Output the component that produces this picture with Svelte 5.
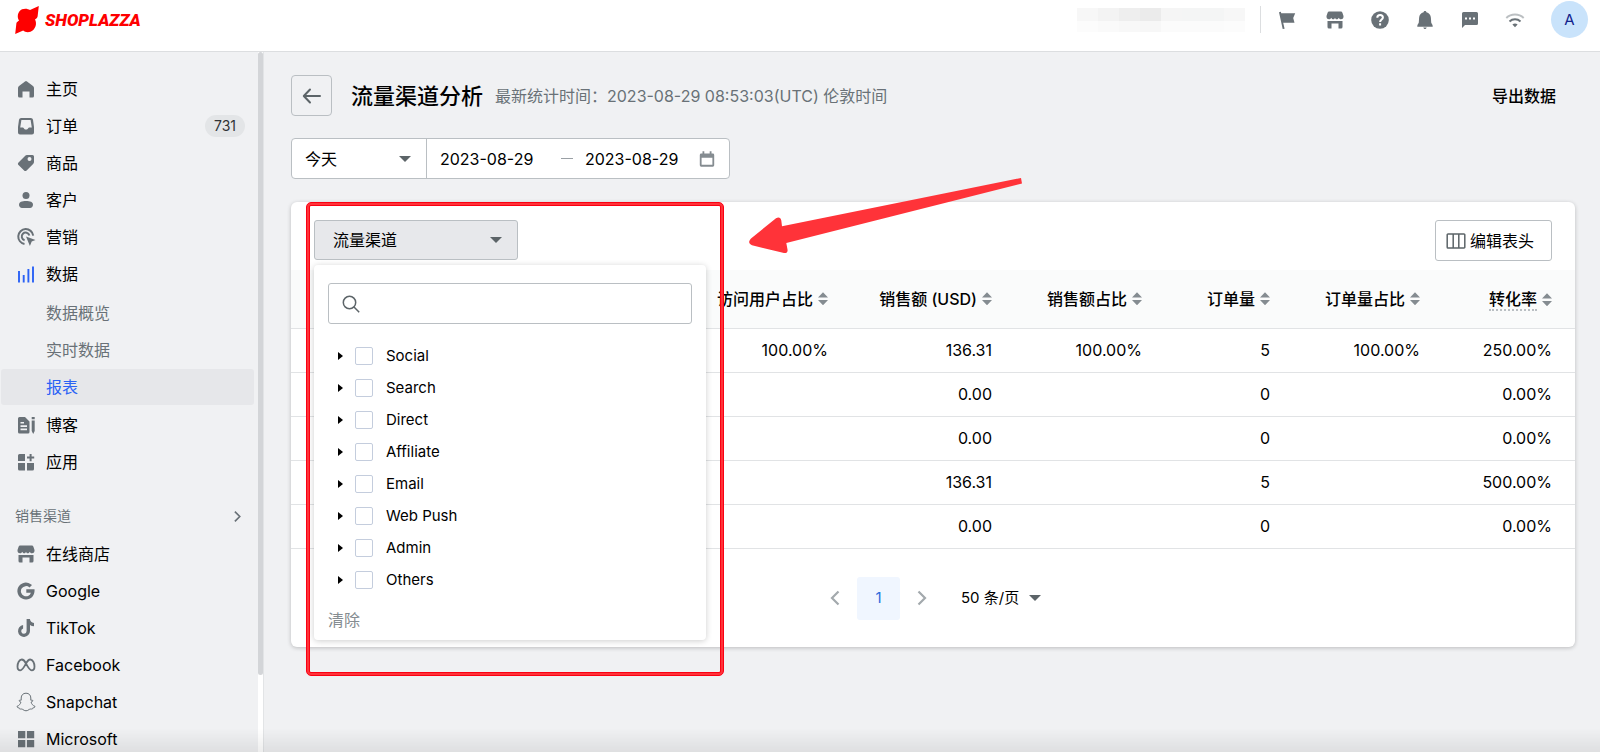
<script lang="ts">
  type NavItem = { label: string; icon?: string; badge?: string; children?: string[] };

  const menu: NavItem[] = [
    { label: '主页', icon: 'home' },
    { label: '订单', icon: 'inbox', badge: '731' },
    { label: '商品', icon: 'tag' },
    { label: '客户', icon: 'user' },
    { label: '营销', icon: 'target' },
    { label: '数据', icon: 'chart', children: ['数据概览', '实时数据', '报表'] },
    { label: '博客', icon: 'blog' },
    { label: '应用', icon: 'apps' },
  ];

  const channels: NavItem[] = [
    { label: '在线商店', icon: 'store' },
    { label: 'Google', icon: 'google' },
    { label: 'TikTok', icon: 'tiktok' },
    { label: 'Facebook', icon: 'meta' },
    { label: 'Snapchat', icon: 'snapchat' },
    { label: 'Microsoft', icon: 'microsoft' },
  ];

  const tools = [
    { name: '公告', icon: 'flag' },
    { name: '店铺', icon: 'store' },
    { name: '帮助', icon: 'help' },
    { name: '通知', icon: 'bell' },
    { name: '消息', icon: 'chat' },
    { name: '网络', icon: 'wifi' },
  ];

  const columns = [
    { label: '访问用户占比', width: 151 },
    { label: '销售额 (USD)', width: 164 },
    { label: '销售额占比', width: 150 },
    { label: '订单量', width: 128 },
    { label: '订单量占比', width: 150 },
    { label: '转化率', width: 132, hint: true },
  ];

  const rows = [
    ['100.00%', '136.31', '100.00%', '5', '100.00%', '250.00%'],
    ['', '0.00', '', '0', '', '0.00%'],
    ['', '0.00', '', '0', '', '0.00%'],
    ['', '136.31', '', '5', '', '500.00%'],
    ['', '0.00', '', '0', '', '0.00%'],
  ];

  const sources = ['Social', 'Search', 'Direct', 'Affiliate', 'Email', 'Web Push', 'Admin', 'Others'];

  let current = $state('报表');
  let open = $state(true);
  let query = $state('');
  let checked = $state<string[]>([]);
  let from = $state('2023-08-29');
  let to = $state('2023-08-29');

  const visible = $derived(sources.filter((s) => s.toLowerCase().includes(query.toLowerCase())));
</script>

{#snippet icon(name: string)}
  <svg class="icon" viewBox="0 0 20 20" fill="currentColor" aria-hidden="true">
    {#if name === 'home'}
      <path d="M9 2.4a1.6 1.6 0 0 1 2 0l6 4.6c.7.5 1 1.2 1 2V17a1.5 1.5 0 0 1-1.5 1.5H13.5v-6h-7v6H3.5A1.5 1.5 0 0 1 2 17V9c0-.8.3-1.5 1-2z" />
    {:else if name === 'inbox'}
      <path fill-rule="evenodd" d="M5.2 2h9.6A2.2 2.2 0 0 1 17 3.8L18 11v5.5a2 2 0 0 1-2 2H4a2 2 0 0 1-2-2V11L3 3.8A2.2 2.2 0 0 1 5.2 2zm.2 2L4.2 11.5h2.6c.5 0 .8.2 1 .7.4.8 1.2 1.3 2.2 1.3s1.8-.5 2.2-1.3c.2-.5.5-.7 1-.7h2.6L14.6 4z" />
    {:else if name === 'tag'}
      <path fill-rule="evenodd" d="M11 2h5.5A1.5 1.5 0 0 1 18 3.5V9c0 .8-.3 1.5-.9 2.1l-6.5 6.4c-.8.7-1.8.7-2.5 0L2.5 12c-.8-.8-.8-1.8 0-2.6L9 2.9C9.5 2.3 10.2 2 11 2zm2.5 6a2 2 0 1 0 0-4 2 2 0 0 0 0 4z" />
    {:else if name === 'user'}
      <circle cx="10" cy="5.5" r="3.5" />
      <path d="M3 14.8C3 12 6 11 10 11s7 1 7 3.8c0 2-1.3 3.2-3 3.2H6c-1.7 0-3-1.2-3-3.2z" />
    {:else if name === 'target'}
      <g fill="none" stroke="currentColor" stroke-width="2">
        <path d="M8.500 17A7.500 7.500 0 1 1 17.200 8.600" />
        <path d="M8.600 13.200A3.900 3.900 0 1 1 13.400 8.400" />
      </g>
      <path d="M10 9.500l9.500 3.500-3.800 1.600-1.800 4.400z" />
    {:else if name === 'chart'}
      <path fill="none" stroke="currentColor" stroke-width="1.9" d="M3 7v11.500M7.700 11v7.500M12.400 5v13.500M17 2.500v16" />
    {:else if name === 'blog'}
      <path fill-rule="evenodd" d="M3.500 2H9l4.500 4.500V17a1.500 1.500 0 0 1-1.500 1.500H3.500A1.500 1.500 0 0 1 2 17V3.500A1.500 1.500 0 0 1 3.500 2zM4.500 7v1.600H8V7zm0 3.300v1.600H11v-1.600zm0 3.300v1.600H11v-1.600z" />
      <path d="M15.700 2h3v2.200h-3zM15.700 5.600h3v10.500l-1.500 2.900-1.500-2.900z" />
    {:else if name === 'apps'}
      <path d="M3.500 2H9v7H2V3.500A1.500 1.500 0 0 1 3.500 2zM2 11h7v7.500H3.500A1.500 1.500 0 0 1 2 17zM11 11h7v6a1.500 1.500 0 0 1-1.500 1.500H11zM13.600 2h2v2.600h2.600v2h-2.600v2.600h-2V6.600H11v-2h2.600z" />
    {:else if name === 'store'}
      <path d="M4.500 1.500h11c1 0 1.600.5 2 1.400L18.500 6c.3 2-.9 3.300-2.500 3.300-1.200 0-2-.6-2.300-1.500-.5 1-1.200 1.500-1.900 1.500s-1.400-.5-1.800-1.500c-.4 1-1.100 1.500-1.800 1.500S6.800 8.800 6.300 7.800C6 8.700 5.200 9.300 4 9.300 2.400 9.300 1.200 8 1.500 6l1-3.100c.4-.9 1-1.400 2-1.400z" />
      <path d="M2.500 11h15v6a1.500 1.500 0 0 1-1.500 1.500h-2.500v-5h-7v5H4A1.500 1.500 0 0 1 2.500 17z" />
    {:else if name === 'google'}
      <path d="M10.300 8.300h8.200c.6 5.700-3 10.200-8.300 10.200A8.500 8.500 0 1 1 16 4.100l-2.500 2.400a5.100 5.100 0 1 0 1.400 5.200h-4.600z" />
    {:else if name === 'tiktok'}
      <path d="M10.600 1h3.300c.3 2.300 1.700 3.800 4.100 4v3.200c-1.500 0-2.900-.4-4-1.200v6a6 6 0 1 1-6.900-6v3.400a2.700 2.700 0 1 0 3.500 2.600z" />
    {:else if name === 'meta'}
      <path fill="none" stroke="currentColor" stroke-width="1.800" d="M10 8.500C8.700 5.900 7.500 4.500 5.800 4.500 3.200 4.500 1.500 8 1.500 11.500c0 2.500 1.200 3.800 2.800 3.800 2.200 0 3.700-3 5.700-6.800 1.600-2.900 2.700-4 4.200-4 2.600 0 4.300 3.500 4.300 7 0 2.500-1.200 3.800-2.800 3.800-2.200 0-3.700-3-5.700-6.800z" />
    {:else if name === 'snapchat'}
      <path fill="none" stroke="currentColor" stroke-width="1" d="M10 1.200c3 0 4.800 2 4.800 4.800v2.200c.5.300 1.300-.3 1.800.1.600.6-.1 1.300-1.500 1.800.5 2 1.700 3.400 3.900 4.300.3.900-.9 1.300-2.200 1.500-.2.500-.1 1-.6 1.100-.8.200-1.700-.3-2.900.4-1.200.8-1.800 1.400-3.300 1.400s-2.100-.6-3.300-1.400c-1.200-.7-2.100-.2-2.900-.4-.5-.1-.4-.6-.6-1.100C1.900 15.700.7 15.300 1 14.400c2.200-.9 3.400-2.300 3.900-4.300-1.400-.5-2.100-1.200-1.500-1.800.5-.4 1.300.2 1.800-.1V6c0-2.800 1.800-4.800 4.800-4.800z" />
    {:else if name === 'microsoft'}
      <path d="M2 2h7.300v7.300H2zM10.900 2h7.300v7.300h-7.300zM2 10.900h7.300v7.300H2zM10.900 10.900h7.300v7.300h-7.300z" />
    {:else if name === 'flag'}
      <path d="M2 2.200l1.900-.4.300 1.400h14l-2 4.700 1.300 4.800H6.200l1.400 6.100-1.900.3z" />
    {:else if name === 'help'}
      <circle cx="10" cy="10" r="8.800" />
      <path fill="none" stroke="#fff" stroke-width="2" d="M7.300 7.800c0-1.700 1.200-2.700 2.800-2.700 1.700 0 2.800 1 2.800 2.500 0 2-2.800 2-2.800 4.500M10.100 13.300v2.100" />
    {:else if name === 'bell'}
      <path d="M10 1c.8 0 1.300.5 1.400 1.300 2.700.6 4.300 2.600 4.500 5.400l.3 4.700c.1 1.200 1.500 1.900 1.500 3.600v.7H2.300V16c0-1.700 1.400-2.400 1.500-3.600l.3-4.700c.2-2.800 1.800-4.800 4.500-5.400C8.700 1.500 9.200 1 10 1zM8.300 17.500h3.400c-.2.900-.8 1.500-1.700 1.500s-1.500-.6-1.700-1.500z" />
    {:else if name === 'chat'}
      <path fill-rule="evenodd" d="M3.500 2h13A1.500 1.500 0 0 1 18 3.500v10a1.500 1.500 0 0 1-1.500 1.500H5l-3 3V3.500A1.500 1.500 0 0 1 3.500 2zM5 7.400v2h2v-2zm4 0v2h2v-2zm4 0v2h2v-2z" />
    {:else if name === 'wifi'}
      <g fill="none" stroke="currentColor" stroke-width="1.900">
        <path opacity=".45" d="M1.300 8a12.600 12.600 0 0 1 17.400 0" />
        <path d="M4.500 11.500a8 8 0 0 1 11 0" />
      </g>
      <path d="M7.400 14.600a4 4 0 0 1 5.200 0L10 17.300z" />
    {:else if name === 'back'}
      <path fill="none" stroke="currentColor" stroke-width="2" stroke-linecap="round" stroke-linejoin="round" d="M18 10H2M8 3.500L1.800 10 8 16.500" />
    {:else if name === 'search'}
      <g fill="none" stroke="currentColor" stroke-width="1.500">
        <circle cx="8.500" cy="8.500" r="6.200" />
        <path d="M13 13l5.200 5.200" />
      </g>
    {:else if name === 'calendar'}
      <path fill-rule="evenodd" d="M5 1.500h2V4h6V1.500h2V4h1.500A1.500 1.500 0 0 1 18 5.500V17a1.500 1.500 0 0 1-1.500 1.500h-13A1.500 1.500 0 0 1 2 17V5.500A1.500 1.500 0 0 1 3.500 4H5zM4 8.500v8h12v-8z" />
    {:else if name === 'columns'}
      <path fill="none" stroke="currentColor" stroke-width="1.500" d="M2 3h16a.8.800 0 0 1 .8.800v12.400a.8.800 0 0 1-.8.800H2a.8.800 0 0 1-.8-.8V3.800A.8.800 0 0 1 2 3zM7.200 3v14M12.800 3v14" />
    {:else if name === 'left'}
      <path fill="none" stroke="currentColor" stroke-width="2.200" d="M13.500 3.500L7 10l6.500 6.500" />
    {:else if name === 'right'}
      <path fill="none" stroke="currentColor" stroke-width="2.200" d="M6.500 3.500L13 10l-6.500 6.500" />
    {/if}
  </svg>
{/snippet}

<header class="topbar">
  <a class="brand" href="#home">
    <svg viewBox="0 0 24 28" aria-hidden="true">
      <path d="M23.800 0L22.600 10.600C22 12.500 20.800 13 20 13.500c2.200 3.800.8 10-4.500 12.200-3 1-5.600.3-7.300-1.200L.2 28 1.400 17.200c.4-1.500 1.700-2 2.700-2.800C1.700 11.500 2.500 5.500 7 3.300c3.300-1.200 6-.5 8 .8z" />
    </svg>
    <span>SHOPLAZZA</span>
  </a>
  <div class="tools">
    <div class="store-name" aria-hidden="true">
      {#each ['#f7f7f7', '#f3f3f3', '#eeeeee', '#ebebeb', '#f5f5f5', '#f4f5f5', '#f4f5f5', '#f7f7f7'] as tint}
        <i style="background: {tint}"></i>
      {/each}
    </div>
    {#each tools as tool}
      <button class="tool" aria-label={tool.name}>{@render icon(tool.icon)}</button>
    {/each}
    <button class="avatar">A</button>
  </div>
</header>

<div class="layout">
  <aside class="sidebar">
    <nav>
      {#each menu as item}
        <a class="item" href="#{item.label}">
          <span class="item-icon" class:blue={item.icon === 'chart'}>{@render icon(item.icon ?? '')}</span>
          {item.label}
          {#if item.badge}<span class="badge">{item.badge}</span>{/if}
        </a>
        {#if item.children}
          <div class="sub">
            {#each item.children as child}
              <a class="sub-item" class:active={current === child} href="#{child}" onclick={() => (current = child)}>{child}</a>
            {/each}
          </div>
        {/if}
      {/each}

      <button class="section">销售渠道 {@render icon('right')}</button>

      {#each channels as item}
        <a class="item" href="#{item.label}">
          <span class="item-icon">{@render icon(item.icon ?? '')}</span>
          {item.label}
        </a>
      {/each}
    </nav>
    <div class="track"><div class="thumb"></div></div>
  </aside>

  <main>
    <div class="page-head">
      <button class="back" aria-label="返回">{@render icon('back')}</button>
      <h1>流量渠道分析</h1>
      <span class="updated">最新统计时间：2023-08-29 08:53:03(UTC) 伦敦时间</span>
      <button class="export">导出数据</button>
    </div>

    <div class="range">
      <div class="select preset">
        <select aria-label="时间范围"><option>今天</option></select>
        <i class="caret"></i>
      </div>
      <div class="dates">
        <input aria-label="开始日期" bind:value={from} />
        <i class="dash"></i>
        <input aria-label="结束日期" bind:value={to} />
        {@render icon('calendar')}
      </div>
    </div>

    <section class="card">
      <div class="toolbar">
        <div class="filter">
          <button class="filter-btn" aria-expanded={open} onclick={() => (open = !open)}>
            流量渠道 <i class="caret"></i>
          </button>
          {#if open}
            <div class="panel">
              <label class="search">
                {@render icon('search')}
                <input type="search" aria-label="搜索" bind:value={query} />
              </label>
              <ul>
                {#each visible as source}
                  <li>
                    <button class="expand" aria-label="展开 {source}"></button>
                    <label>
                      <input type="checkbox" value={source} bind:group={checked} />
                      {source}
                    </label>
                  </li>
                {/each}
              </ul>
              <button class="clear" onclick={() => (checked = [])}>清除</button>
            </div>
          {/if}
          <div class="marker"></div>
          <svg class="arrow" viewBox="0 0 273 76" aria-hidden="true">
            <path d="M272 0L33 48.300 32.300 42.500C31.800 39.500 29.500 38.500 27 40.300L2 60.500C-.8 63.500-.3 66 3 67.200L34 74.800C37.500 75.500 39 74 38.500 71.500L37.300 65 273 5.500z" />
          </svg>
        </div>
        <button class="edit">{@render icon('columns')} 编辑表头</button>
      </div>

      <table>
        <colgroup>
          <col />
          {#each columns as col}
            <col style="width: {col.width}px" />
          {/each}
        </colgroup>
        <thead>
          <tr>
            <td></td>
            {#each columns as col}
              <th scope="col">
                <button class="sort"><span class:hint={col.hint}>{col.label}</span><i class="sorter"></i></button>
              </th>
            {/each}
          </tr>
        </thead>
        <tbody>
          {#each rows as row}
            <tr>
              <td></td>
              {#each row as cell}
                <td>{cell}</td>
              {/each}
            </tr>
          {/each}
        </tbody>
      </table>

      <div class="pager">
        <button class="step" aria-label="上一页">{@render icon('left')}</button>
        <button class="page">1</button>
        <button class="step" aria-label="下一页">{@render icon('right')}</button>
        <div class="select size">
          <select aria-label="每页条数"><option>50 条/页</option></select>
          <i class="caret"></i>
        </div>
      </div>
    </section>
  </main>
</div>
<div class="fade"></div>

<style>
  :global(body) {
    background: #f0f1f3;
    color: #000;
    font: 16px/24px Inter, 'Noto Sans CJK SC', sans-serif;
  }
  :global(#app *) { box-sizing: border-box; }
  button, input, select { font: inherit; color: inherit; margin: 0; padding: 0; border: 0; background: none; outline: 0; }
  button { cursor: pointer; }
  a { color: inherit; text-decoration: none; }
  .icon { display: block; flex: none; width: 20px; height: 20px; }

  .topbar { display: flex; align-items: center; justify-content: space-between; height: 52px; padding: 0 12px 12px 15px; background: #fff; border-bottom: 1px solid #dcdee0; }
  .brand { display: flex; align-items: center; gap: 6px; color: #fe0000; font: italic 900 17px/28px Roboto, sans-serif; }
  .brand svg { width: 24px; height: 28px; fill: #fe0000; }
  .tools { display: flex; align-items: center; color: #697177; }
  .store-name { display: flex; width: 168px; height: 24px; margin-right: 15px; }
  .store-name i { flex: 1; -webkit-mask: linear-gradient(#000 55%, rgba(0, 0, 0, .4) 56%); mask: linear-gradient(#000 55%, rgba(0, 0, 0, .4) 56%); }
  .tool { width: 45px; height: 27px; display: grid; place-items: center; }
  .store-name + .tool { width: 52px; border-left: 1px solid #dcdee0; }
  .avatar { width: 37px; height: 37px; margin-left: 14px; border-radius: 50%; background: #c9e3fb; color: #12238c; font-size: 15px; }

  .layout { display: flex; height: calc(100vh - 52px); overflow: hidden; }
  .sidebar { display: flex; flex: none; width: 264px; border-right: 1px solid #e2e4e6; }
  nav { flex: 1; padding: 19px 4px 0 1px; }
  .item { display: flex; align-items: center; height: 36px; margin-bottom: 1px; padding: 0 9px 0 15px; }
  .item-icon { width: 30px; color: #697177; }
  .blue { color: #2b62f5; }
  .badge { margin-left: auto; padding: 0 9px; border-radius: 12px; background: #e3e5e7; color: #303336; font-size: 14px; line-height: 22px; }
  .sub { padding: 2px 0 1px; }
  .sub-item { display: block; padding: 6px 0 6px 45px; margin-bottom: 1px; border-radius: 3px; color: #697177; }
  .active { background: #e6e7ea; color: #2b62f5; }
  .section { display: flex; align-items: center; justify-content: space-between; width: 100%; margin: 24px 0 8px; padding: 0 9px 0 14px; color: #697177; font-size: 14px; }
  .section .icon { width: 15px; height: 15px; }
  .track { width: 5px; background: #fff; }
  .thumb { height: 89%; border-radius: 3px; background: #d3d5d8; }

  main { flex: 1; min-width: 0; padding: 23px 25px 0 27px; }
  .page-head { display: flex; align-items: center; height: 41px; }
  .back { display: grid; place-items: center; width: 41px; height: 41px; border: 1px solid #babfc3; border-radius: 4px; color: #5c6468; }
  h1 { margin: 0 12px 0 19px; font-size: 22px; line-height: 32px; font-weight: 500; }
  .updated { color: #697177; }
  .export { margin: 0 19px 0 auto; font-weight: 500; }

  .range { display: flex; width: 439px; height: 41px; margin-top: 22px; border: 1px solid #babfc3; border-radius: 4px; background: #fff; }
  .caret { display: block; width: 0; border: 6px solid transparent; border-top-color: #5c6468; border-bottom: 0; }
  .select { display: flex; align-items: center; position: relative; }
  .select select { appearance: none; width: 100%; }
  .select .caret { position: absolute; right: 0; pointer-events: none; }
  .preset { width: 135px; padding-left: 13px; border-right: 1px solid #babfc3; }
  .preset .caret { right: 15px; }
  .dates { display: flex; flex: 1; align-items: center; padding: 0 13px; }
  .dates input { width: 112px; min-width: 0; }
  .dates input:last-of-type { width: 100px; }
  .dates .icon { width: 18px; height: 18px; color: #858c91; margin-left: auto; }
  .dash { width: 12px; height: 1px; margin: 0 12px 0 9px; background: #9aa0a5; }

  .card { margin-top: 23px; border-radius: 6px; background: #fff; box-shadow: 0 1px 4px rgba(0, 0, 0, .22); }
  .toolbar { display: flex; justify-content: space-between; padding: 18px 23px 9px; }
  .filter { position: relative; }
  .filter-btn { display: flex; align-items: center; justify-content: space-between; width: 204px; height: 40px; padding: 0 15px 0 18px; border: 1px solid #babfc3; border-radius: 3px; background: #e7e8eb; }
  .edit { display: flex; align-items: center; gap: 4px; height: 41px; padding: 0 17px 0 10px; border: 1px solid #babfc3; border-radius: 3px; }
  .edit .icon { color: #5c6468; }
  .panel { position: absolute; z-index: 1; top: 45px; left: 0; width: 392px; padding: 18px 14px 8px 14px; border-radius: 4px; background: #fff; box-shadow: 0 1px 6px rgba(0, 0, 0, .2); font-size: 15px; }
  .search { display: flex; align-items: center; gap: 10px; height: 41px; padding: 0 12px; border: 1px solid #babfc3; border-radius: 3px; color: #5c6468; }
  .search input { flex: 1; min-width: 0; }
  ul { list-style: none; margin: 16px 0 12px; padding: 0 0 0 10px; }
  li, li label { display: flex; align-items: center; height: 32px; }
  .expand { width: 5px; height: 8px; margin-right: 12px; background: #000; clip-path: polygon(0 0, 100% 50%, 0 100%); }
  input[type='checkbox'] { appearance: none; width: 18px; height: 18px; margin-right: 13px; border: 1px solid #c4cddd; border-radius: 2px; }
  input[type='checkbox']:checked { background: #2b62f5; }
  .clear { display: block; color: #858c91; font-size: 16px; }
  .marker { position: absolute; z-index: 2; top: -18px; left: -8px; width: 418px; height: 474px; border: 1px solid #fb0013; border-radius: 5px; box-shadow: inset 0 0 0 2px #ff3339, inset 0 0 0 3px #fb0013; pointer-events: none; }
  .arrow { position: absolute; z-index: 2; top: -42px; left: 435px; width: 273px; height: 76px; fill: #ff3339; pointer-events: none; }

  table { width: 100%; table-layout: fixed; border-collapse: collapse; }
  th, td { padding: 0 23px 0 0; text-align: right; white-space: nowrap; border-bottom: 1px solid #e1e3e5; }
  thead th, thead td { height: 58px; padding-left: 0; background: #fafbfb; }
  tbody td { height: 44px; }
  .sort { display: inline-flex; align-items: center; gap: 5px; font-weight: 500; }
  .hint { border-bottom: 2px dotted #babfc3; line-height: 20px; }
  .sorter { width: 10px; height: 13px; background: #858c91; clip-path: polygon(50% 0, 100% 40%, 0 40%, 0 60%, 100% 60%, 50% 100%, 0 60%, 0 40%); }

  .pager { display: flex; align-items: center; justify-content: center; padding: 28px 0 27px; font-size: 15px; }
  .step { padding: 0 12px 0 0; color: #a3a9ad; }
  .page { width: 43px; height: 43px; border-radius: 3px; background: #f0f6ff; color: #2b6bdb; }
  .page + .step { padding: 0 29px 0 12px; }
  .size { width: 80px; }

  .fade { position: fixed; inset: auto 0 0; height: 24px; background: linear-gradient(transparent, rgba(0, 0, 0, .07)); pointer-events: none; }
</style>
